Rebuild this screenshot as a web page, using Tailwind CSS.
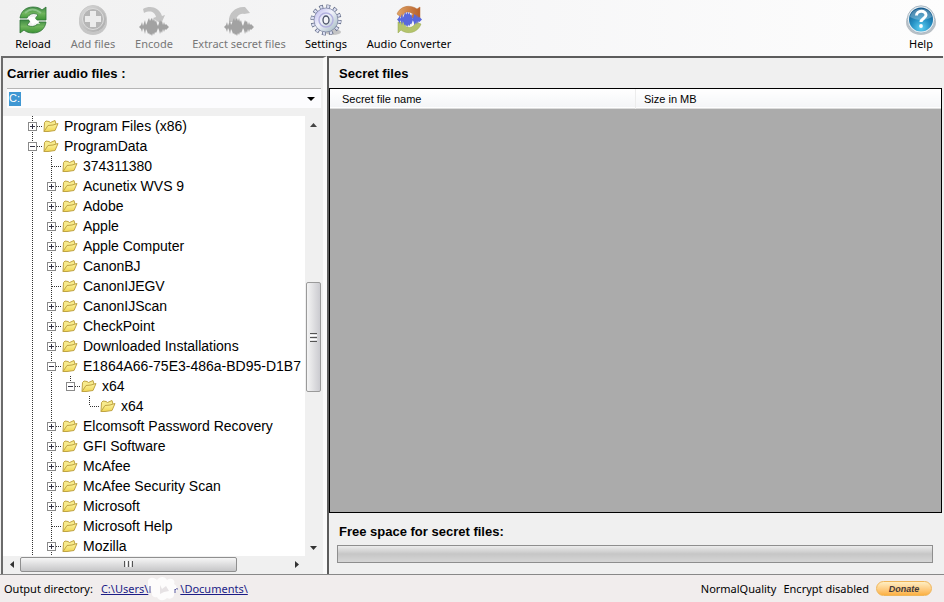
<!DOCTYPE html>
<html lang="en">
<head>
<meta charset="utf-8">
<meta name="viewport" content="width=device-width, initial-scale=1">
<title>Audio steganography</title>
<script src="https://cdn.jsdelivr.net/npm/@tailwindcss/browser@4"></script>
</head>
<body class="flex h-screen flex-col overflow-hidden bg-[#f0f0f0] font-['Liberation_Sans',Arial,sans-serif] text-black">

<svg class="absolute size-0" aria-hidden="true">
  <defs>
    <linearGradient id="gGreen" x1="0" y1="0" x2="0" y2="1"><stop offset="0" stop-color="#3f8a45"/><stop offset=".5" stop-color="#6fb45c"/><stop offset="1" stop-color="#3c9434"/></linearGradient>
    <linearGradient id="gGrey" x1="0" y1="0" x2="1" y2="1"><stop offset="0" stop-color="#dadada"/><stop offset="1" stop-color="#a9a9a9"/></linearGradient>
    <linearGradient id="gGear" x1="0" y1="0" x2="1" y2="1"><stop offset="0" stop-color="#b9b4ee"/><stop offset=".45" stop-color="#f1f3fb"/><stop offset="1" stop-color="#9db4bd"/></linearGradient>
    <radialGradient id="gHelp" cx=".5" cy=".85" r=".8"><stop offset="0" stop-color="#5fd0f2"/><stop offset=".5" stop-color="#2590c4"/><stop offset="1" stop-color="#135a8c"/></radialGradient>
    <linearGradient id="gOrange" x1="0" y1="0" x2="1" y2="0"><stop offset="0" stop-color="#e0a566"/><stop offset="1" stop-color="#b9602a"/></linearGradient>
    <linearGradient id="gFolder" x1="0" y1="0" x2="0" y2="1"><stop offset="0" stop-color="#fdf6a4"/><stop offset="1" stop-color="#f0d552"/></linearGradient>
    <symbol id="wave" viewBox="0 0 30 18"><path d="M0 9 2 7 3 4 4 8 5 5 6 2 7 7 8 5 9 2 10 0 11 3 12 1 13 0 14 3 15 0 16 4 17 2 18 6 19 8 20 5 21 2 22 4 23 3 24 7 25 4 26 7 27 6 30 9 27 12 26 11 25 14 24 11 23 15 22 13 21 16 20 12 19 10 18 13 17 15 16 14 15 17 14 15 13 18 12 16 11 17 10 15 9 16 8 13 7 11 6 16 5 12 4 10 3 14 2 11Z"/></symbol>
    <symbol id="folder" viewBox="0 0 16 14"><path d="M1 12.500 1.500 3.500 3 2 6 2.500 7.500 3.500 12 1.500 13 5" fill="#f7eb8c" stroke="#c0a443"/><path d="M1 12.500 5 6.500 10 6 15 4.500 12 11.500 5 12.500Z" fill="url(#gFolder)" stroke="#c0a443" stroke-linejoin="round"/></symbol>
  </defs>
</svg>

<header class="flex h-14 shrink-0 items-start justify-between bg-linear-to-r from-[#f1f1f1] via-[#f6f6f7] to-[#fdfdfd] px-[5px] pt-1 font-['Noto_Sans','Open_Sans',sans-serif] text-[11px] leading-4">
  <nav class="flex" aria-label="Toolbar">
    <button class="flex w-14 flex-col items-center whitespace-nowrap">
      <svg class="size-8" viewBox="0 0 32 32"><g fill="url(#gGreen)" stroke="#2f7436" stroke-width=".8" stroke-linejoin="round"><path d="M3 14C4 7 9 3 16 3c4 0 7 1 9 3l4-3v13H17l4-5c-4-3-9-1-11 3Z"/><path d="M29 18c-1 7-6 11-13 11-4 0-7-1-9-3l-4 3V16h11l-4 5c5 3 10 1 12-3Z"/></g><path d="M8 9c5-5 11-4 16 0" fill="none" stroke="#8cc487" stroke-width="2"/><path d="M11 13h6l6 7-5-1-2 2-4-5Z" fill="#fff"/></svg>
      <span class="h-4">Reload</span>
    </button>
    <button class="flex w-16 flex-col items-center whitespace-nowrap text-[#777]" disabled>
      <svg class="size-8" viewBox="0 0 32 32"><ellipse cx="16" cy="18" rx="14" ry="13" fill="#c6c6c6"/><circle cx="16" cy="15" r="13.500" fill="url(#gGrey)" stroke="#c9c9c9"/><circle cx="16" cy="15" r="10.500" fill="#b6b6b6" stroke="#dcdcdc"/><path d="M13 7h6v5h5v6h-5v5h-6v-5H8v-6h5Z" fill="#ececec"/></svg>
      <span class="h-4">Add files</span>
    </button>
    <button class="flex w-[58px] flex-col items-center whitespace-nowrap text-[#777]" disabled>
      <svg class="size-8" viewBox="0 0 32 32"><path d="M5 5C12 1 21 3 24 12l3-1-4 9-8-6 3-1C17 8 12 6 6 9Z" fill="#c4c4c4"/><use href="#wave" x="1" y="14" width="30" height="18" fill="#a2a2a2"/></svg>
      <span class="h-4">Encode</span>
    </button>
    <button class="flex w-28 flex-col items-center whitespace-nowrap text-[#777]" disabled>
      <svg class="size-8" viewBox="0 0 32 32"><path d="M6 18C5 9 13 2 22 3l5 6-6 1c-5-1-8 3-8 8Z" fill="#c4c4c4"/><use href="#wave" x="1" y="14" width="30" height="18" fill="#a2a2a2"/></svg>
      <span class="h-4">Extract secret files</span>
    </button>
    <button class="flex w-[62px] flex-col items-center whitespace-nowrap">
      <svg class="size-8" viewBox="0 0 32 32"><ellipse cx="23" cy="28" rx="8" ry="3" fill="#c4c4c4"/><circle cx="16" cy="16" r="13.500" fill="none" stroke="#5c6682" stroke-width="4" stroke-dasharray="3.800 3.270"/><circle cx="16" cy="16" r="13.500" fill="none" stroke="#dcdff2" stroke-width="3" stroke-dasharray="2.400 4.670" stroke-dashoffset="-.7"/><circle cx="16" cy="16" r="12" fill="url(#gGear)" stroke="#77809d" stroke-width=".7"/><circle cx="16" cy="16" r="7" fill="none" stroke="#b2b0df" stroke-width="1.500"/><ellipse cx="16" cy="16" rx="3" ry="4" fill="#f4f4f8" stroke="#4b5268" stroke-width="1.300"/></svg>
      <span class="h-4">Settings</span>
    </button>
    <button class="flex w-[104px] flex-col items-center whitespace-nowrap">
      <svg class="size-8" viewBox="0 0 32 32"><path d="M4 10C7 2 17 0 24 5l3-2v11H17l3-4C15 6 10 8 9 14Z" fill="url(#gOrange)" stroke="#b9733c" stroke-width=".5"/><path d="M28 20c-3 9-14 11-20 6l-3 3V18h10l-3 4c5 3 9 1 11-4Z" fill="#b4c46c" stroke="#96a94e" stroke-width=".5"/><use href="#wave" x="4" y="7" width="25" height="17" fill="#5868dc"/></svg>
      <span class="h-4">Audio Converter</span>
    </button>
  </nav>
  <button class="flex w-9 flex-col items-center whitespace-nowrap">
    <svg class="size-8" viewBox="0 0 32 32"><ellipse cx="16" cy="18" rx="15" ry="13" fill="#b9c0c6"/><circle cx="16" cy="15.500" r="13.700" fill="#e6edf2" stroke="#aab9c4"/><circle cx="16" cy="15.500" r="12" fill="url(#gHelp)"/><path d="M5 13C7 2 25 2 27 13c-7 4-15 4-22 0Z" fill="#fff" opacity=".25"/><path d="M11.500 11.500c0-5.500 9.500-5.500 9.500-.5 0 3.500-5 3.500-5 7" fill="none" stroke="#fff" stroke-width="3"/><circle cx="16" cy="22" r="1.900" fill="#fff"/></svg>
    <span class="h-4">Help</span>
  </button>
</header>

<main class="flex min-h-0 flex-1 px-px">
  <section class="flex w-[326px] shrink-0 flex-col border-t-2 border-r-4 border-l-2 border-[#6b6b6b] border-r-[#fafafa] pb-[2px]">
    <label for="drive" class="flex h-[30px] shrink-0 items-center pt-[2px] pl-1 text-[13px] font-bold">Carrier audio files :</label>
    <div class="mr-[2px] ml-1 flex h-5 shrink-0 items-center justify-between border-t border-[#b5b5b5] bg-[#fcfcfe] pr-1 pl-[2px]">
      <input id="drive" type="text" value="C:" class="h-[14px] w-3 bg-[#3f97d3] text-[11px] text-white outline-none">
      <button class="flex size-3 items-center justify-center" aria-label="Choose drive"><svg class="h-1 w-2" viewBox="0 0 8 4"><path d="M0 0h8L4 4Z"/></svg></button>
    </div>
    <div class="mt-2 flex min-h-0 flex-1">
      <ul id="tree" class="min-w-0 flex-1 overflow-hidden bg-white pl-5 text-[14px] leading-5 whitespace-nowrap" aria-label="Folders"></ul>
      <div class="mr-[2px] flex w-4 shrink-0 flex-col items-center bg-[#f0f0f0]">
        <button class="flex h-[17px] w-4 items-center justify-center" aria-label="Scroll up"><svg class="h-1 w-[7px]" viewBox="0 0 7 4"><path d="M0 4h7L3.500 0Z" fill="#444"/></svg></button>
        <div class="grow-[149] basis-0"></div>
        <div class="flex w-[15px] grow-[108] basis-0 flex-col items-center justify-center gap-px rounded-xs border border-[#9a9a9a] bg-linear-to-r from-[#f4f4f4] to-[#cbcbd0]">
          <span class="h-px w-[7px] bg-[#555]"></span><span class="h-px w-[7px] bg-white"></span><span class="h-px w-[7px] bg-[#555]"></span><span class="h-px w-[7px] bg-white"></span><span class="h-px w-[7px] bg-[#555]"></span>
        </div>
        <div class="grow-[147] basis-0"></div>
        <button class="flex h-[17px] w-4 items-center justify-center" aria-label="Scroll down"><svg class="h-1 w-[7px]" viewBox="0 0 7 4"><path d="M0 0h7L3.500 4Z" fill="#333"/></svg></button>
      </div>
    </div>
    <div class="mr-[18px] flex h-4 shrink-0 items-center bg-[#f0f0f0]">
      <button class="flex h-4 w-[17px] items-center justify-center" aria-label="Scroll left"><svg class="h-[7px] w-1" viewBox="0 0 4 7"><path d="M4 0v7L0 3.500Z" fill="#333"/></svg></button>
      <div class="flex h-[15px] grow-[217] basis-0 items-center justify-center gap-px rounded-xs border border-[#8f8f8f] bg-linear-to-b from-[#f6f6f6] to-[#c6c6c8]">
        <span class="h-[6px] w-px bg-[#555]"></span><span class="h-[6px] w-px bg-white"></span><span class="h-[6px] w-px bg-[#555]"></span><span class="h-[6px] w-px bg-white"></span><span class="h-[6px] w-px bg-[#555]"></span>
      </div>
      <div class="grow-[51] basis-0"></div>
      <button class="flex h-4 w-[17px] items-center justify-center" aria-label="Scroll right"><svg class="h-[7px] w-1" viewBox="0 0 4 7"><path d="M0 0v7L4 3.500Z" fill="#333"/></svg></button>
    </div>
  </section>

  <section class="flex min-w-0 flex-1 flex-col border-t-2 border-l-2 border-[#5c5c5c]">
    <h2 class="flex h-[30px] shrink-0 items-center pt-[2px] pl-[10px] text-[13px] font-bold">Secret files</h2>
    <div class="mr-px min-h-0 flex-1 border border-black bg-[#ababab]">
      <table class="w-full table-fixed border-collapse text-left text-[11px]">
        <thead>
          <tr class="h-[19px] border-b border-[#dcdcdc] bg-linear-to-b from-white to-[#f4f5f7]">
            <th class="w-1/2 border-r border-[#ececec] p-0 pt-[2px] pl-3 font-normal">Secret file name</th>
            <th class="w-1/2 p-0 pt-[2px] pl-2 font-normal">Size in MB</th>
          </tr>
        </thead>
      </table>
    </div>
    <div class="flex h-[61px] shrink-0 flex-col pt-[9px] pr-[10px] pl-2">
      <span id="free-label" class="h-[22px] pl-[2px] text-[13px] leading-5 font-bold">Free space for secret files:</span>
      <div role="progressbar" aria-labelledby="free-label" class="mt-px h-[18px] border border-[#8e8e8e] bg-linear-to-b from-[#ececec] via-[#c6c6c6] to-[#d6d6d6]"></div>
    </div>
  </section>
</main>

<footer class="flex h-7 shrink-0 items-center justify-between border-t border-[#888] bg-[#f1eded] pr-3 pl-1 font-['Noto_Sans','Open_Sans',sans-serif] text-[11px] leading-4 whitespace-nowrap">
  <div class="flex items-center gap-2">
    <span>Output directory:</span>
    <a href="#" class="flex items-center text-[#1c1c86]"><span class="underline">C:\Users\</span><svg class="h-6 w-8" viewBox="0 0 32 24" aria-hidden="true"><path d="M0 3c3-4 7-2 9 0 3-4 8-4 10 0 4-3 9 0 7 4 5 3 3 9 0 9 1 4-3 7-7 5-4 4-9 2-10-1-4 1-6-2-5-5-4-2-5-8-4-12Z" fill="#fdfcfc"/><path d="m12 8 2 4 4-3 3 5-5 1-4 2Z" fill="#e6e2e4"/><path d="M2 9v7M27 12v4M27 13q1-2 3-1" fill="none" stroke="#55559c"/></svg><span class="underline">\Documents\</span></a>
  </div>
  <div class="flex items-center gap-[7px]">
    <span>NormalQuality</span>
    <span>Encrypt disabled</span>
    <button class="flex h-[15px] w-14 items-center justify-center rounded-full border border-[#f0b65a] bg-linear-to-b from-[#ffeec2] to-[#fbb040] font-['Liberation_Sans',Arial,sans-serif] text-[9px] font-bold text-[#443a3a] italic">Donate</button>
  </div>
</footer>

<script>
  // [depth, name, state]: "+" collapsed, "-" expanded, "" no children.
  const folders = [
    [0, "Program Files (x86)", "+"], [0, "ProgramData", "-"],
    [1, "374311380", ""], [1, "Acunetix WVS 9", "+"], [1, "Adobe", "+"], [1, "Apple", "+"],
    [1, "Apple Computer", "+"], [1, "CanonBJ", "+"], [1, "CanonIJEGV", ""], [1, "CanonIJScan", "+"],
    [1, "CheckPoint", "+"], [1, "Downloaded Installations", "+"],
    [1, "E1864A66-75E3-486a-BD95-D1B7", "-"], [2, "x64", "-"], [3, "x64", ""],
    [1, "Elcomsoft Password Recovery", "+"], [1, "GFI Software", "+"], [1, "McAfee", "+"],
    [1, "McAfee Security Scan", "+"], [1, "Microsoft", "+"], [1, "Microsoft Help", ""], [1, "Mozilla", "+"]
  ];
  const line = (d) => `<path d="${d}" stroke="#333" stroke-dasharray="1 1" fill="none"/>`;
  const cell = (body) => `<svg class="block h-5 w-[19px] shrink-0" viewBox="0 0 19 20" shape-rendering="crispEdges">${body}</svg>`;
  document.getElementById("tree").innerHTML = folders.map(([depth, name, state]) => {
    let guides = "";
    for (let i = 0; i < depth; i++) guides += cell(i < 2 ? line("M9.5 0V20") : "");
    let node = line(depth < 2 ? "M9.5 0V20" : "M9.5 0V10") + line("M9.5 10.5H19");
    if (state) {
      node += `<rect x="5.5" y="6.5" width="8" height="8" fill="#fff" stroke="#8a8a8a"/><path d="M7 10.5h5" stroke="#334"/>`;
      if (state === "+") node += `<path d="M9.5 8v5" stroke="#334"/>`;
    }
    const toggle = state ? `<button class="block shrink-0" aria-label="Toggle ${name}">${cell(node)}</button>` : cell(node);
    return `<li class="flex h-5 items-center">${guides}${toggle}<svg class="ml-px h-[14px] w-4 shrink-0" viewBox="0 0 16 14"><use href="#folder"/></svg><span class="pl-[5px]">${name}</span></li>`;
  }).join("");
</script>
</body>
</html>
